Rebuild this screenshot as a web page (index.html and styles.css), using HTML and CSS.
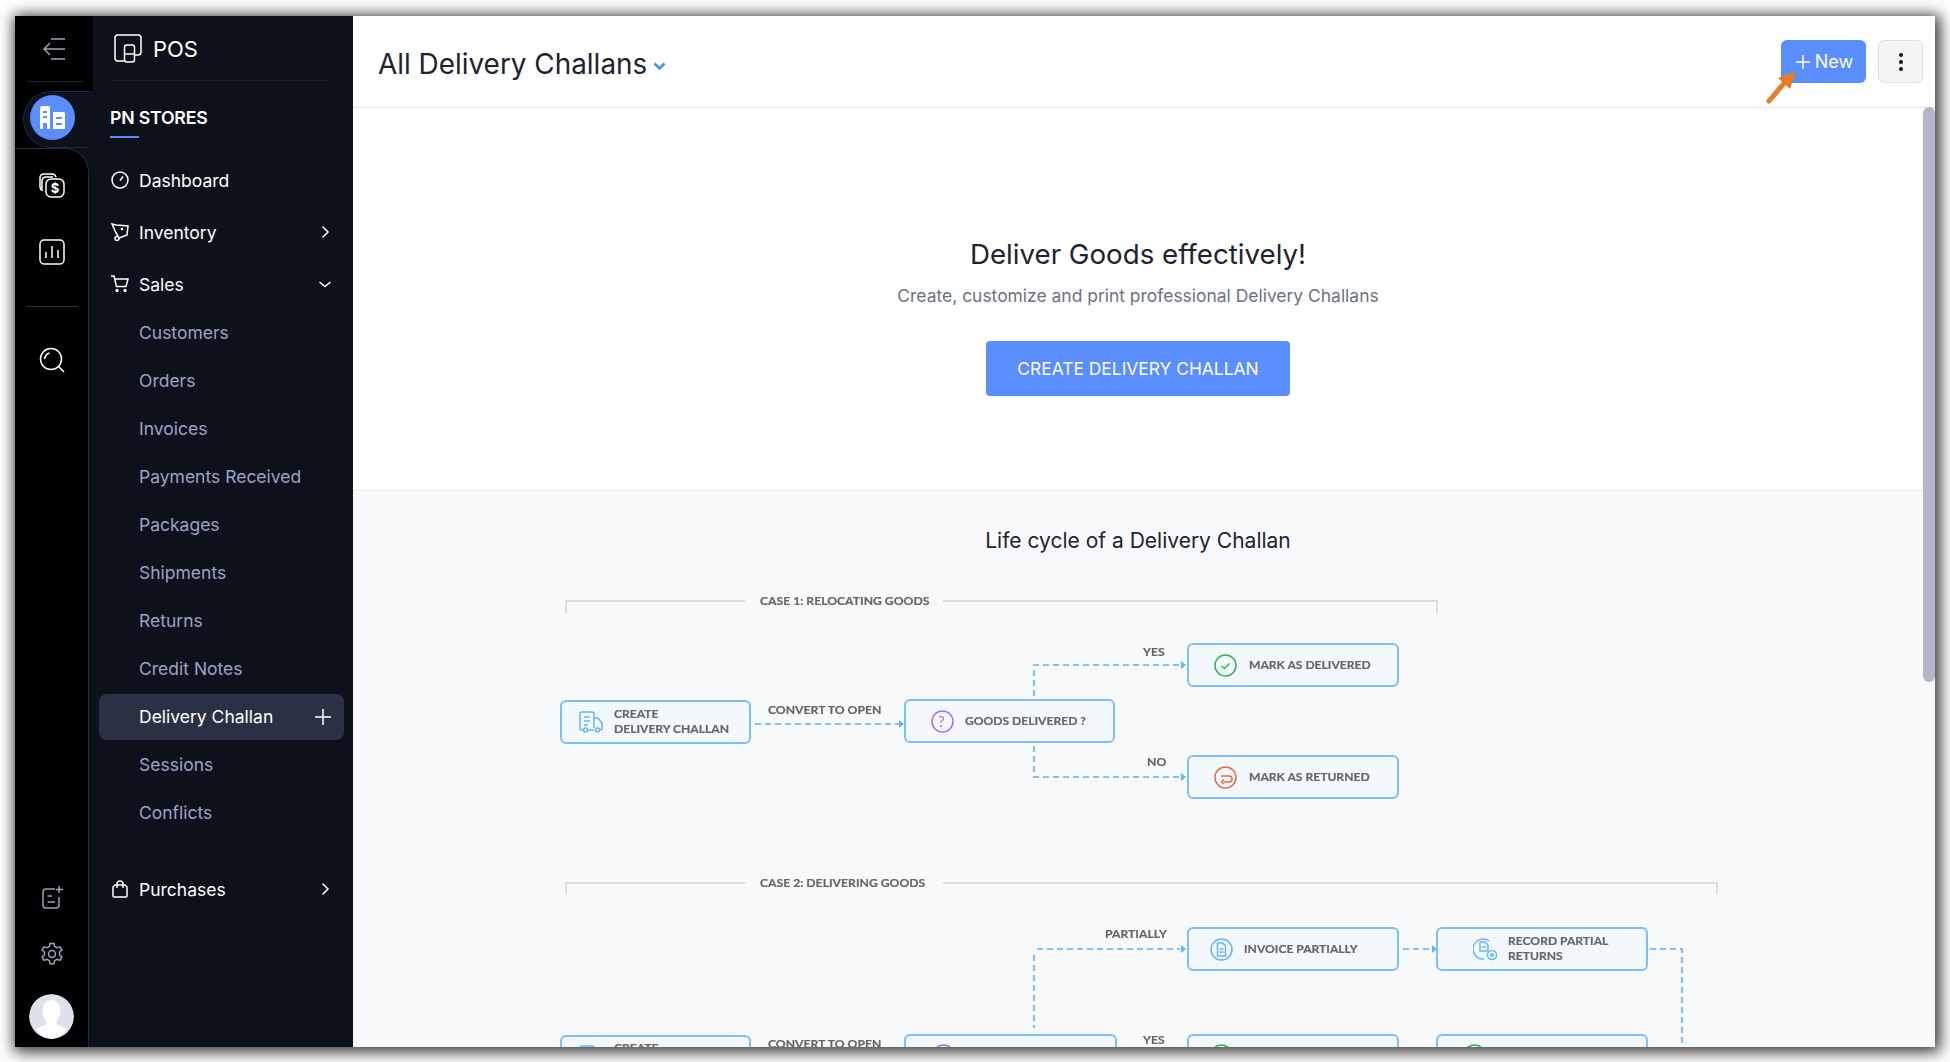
FILE: index.html
```html
<!DOCTYPE html>
<html>
<head>
  <title>All Delivery Challans</title>
  <link rel="stylesheet" href="styles.css">
</head>
<body>
<div class="frame">

  <!-- icon rail -->
  <div class="rail">
    <div class="rail-top">
      <svg class="ico-back" width="24" height="24" viewBox="0 0 24 24"><path d="M8 2h14M1 12h21M8 22h14M7 6l-6 6 6 6"/></svg>
    </div>
    <div class="rail-pocket">
      <div class="pocket-pill">
        <div class="org-badge">
          <svg width="27" height="25" viewBox="0 0 27 25"><path fill="#fff" d="M1 3q0-2 2-2h6q2 0 2 2v21H1z"/><path fill="#fff" d="M14 7h10q2 0 2 2v15H14z"/><path fill="#5a8eff" d="M4 6h4v2H4zM4 11h4v2H4zM4 18h4v6H4zM17 12h6v2h-6zM17 18h6v2h-6z"/></svg>
        </div>
      </div>
    </div>
    <div class="rail-body">
      <div class="rail-main">
        <div class="rail-btn">
          <svg width="26" height="26" viewBox="0 0 26 26" class="ico-w"><path d="M4 18.500q-3-.5-3-4V6q0-4 4-4h8q3 0 4 3"/><path d="M3 17V9q0-4 4-4h7"/><rect x="7" y="7" width="18" height="18" rx="5"/><text x="16" y="21" class="ico-dollar">$</text></svg>
        </div>
        <div class="rail-btn">
          <svg width="26" height="26" viewBox="0 0 26 26" class="ico-w"><rect x="1" y="1" width="24" height="24" rx="4"/><path d="M7 19v-6M13 19V7M19 19v-8"/></svg>
        </div>
        <div class="rail-line"></div>
        <div class="rail-btn rail-search">
          <svg width="26" height="26" viewBox="0 0 26 26" class="ico-w"><circle cx="12" cy="12" r="10.500"/><path d="M19.500 19.500l5.500 5.500M5.500 12q1-5 5-6"/></svg>
        </div>
      </div>
      <div class="rail-foot">
        <svg class="ico-g foot-note" width="24" height="24" viewBox="0 0 24 24"><path d="M14 3H5Q2 3 2 6v13q0 3 3 3h10q3 0 3-3V11M6.500 10H11M6.500 16H14M18 0v7M15 3.500h7"/></svg>
        <svg class="ico-g foot-gear" width="24" height="24" viewBox="0 0 24 24"><circle cx="12" cy="12" r="3.500"/><path d="M10 1.500h4l.6 3 2.400 1.300 2.900-1 2 3.400-2.300 2 .0 2.800 2.300 2-2 3.400-2.900-1-2.400 1.300-.6 3h-4l-.6-3L7 17.400l-2.900 1-2-3.400 2.300-2v-2.800l-2.300-2 2-3.400 2.900 1L9.400 4.500z"/></svg>
        <div class="avatar">
          <svg width="45" height="45" viewBox="0 0 45 45"><circle cx="22.500" cy="22.500" r="22.500" fill="#dde1ec"/><path fill="#fff" d="M22.500 6c6 0 9 5 9 11 0 5-2 8-4 10v3l10 5c-3 6-9 10-15 10s-12-4-15-10l10-5v-3c-2-2-4-5-4-10 0-6 3-11 9-11z"/></svg>
        </div>
      </div>
    </div>
  </div>

  <!-- menu -->
  <div class="side">
    <div class="side-head">
      <svg class="ico-w side-logo" width="29" height="29" viewBox="0 0 29 29"><path d="M10 27H4q-3 0-3-3V4q0-3 3-3h20q3 0 3 3v14q0 3-3 3h-4"/><rect x="10.500" y="11" width="10" height="17" rx="2.500"/><path d="M10.500 20h10"/></svg>
      <span class="side-app">POS</span>
    </div>
    <div class="store">
      <div class="store-name">PN STORES</div>
      <div class="store-bar"></div>
    </div>
    <div class="menu">
      <div class="menu-top">
        <svg class="ico-w" width="18" height="18" viewBox="0 0 18 18"><circle cx="9" cy="9" r="8"/><path d="M9 9.500l3-4"/></svg>
        <span>Dashboard</span>
      </div>
      <div class="menu-top">
        <svg class="ico-w" width="18" height="18" viewBox="0 0 18 18"><path d="M1 1l4 1 12 1-1 9-8 3-3-5z"/><circle cx="6" cy="15.500" r="2"/><circle cx="11" cy="6" r=".6"/></svg>
        <span>Inventory</span>
        <svg class="chev" width="14" height="14" viewBox="0 0 14 14"><path d="M4.500 1.500L10 7l-5.500 5.500"/></svg>
      </div>
      <div class="menu-top menu-open">
        <svg class="ico-w" width="18" height="18" viewBox="0 0 18 18"><path d="M0 1h3l2.500 10.500H15L17 4H4"/><circle cx="6" cy="15.500" r=".9"/><circle cx="14" cy="15.500" r=".9"/></svg>
        <span>Sales</span>
        <svg class="chev" width="14" height="14" viewBox="0 0 14 14"><path d="M1.500 5L7 9.500 12.500 5"/></svg>
      </div>
      <div class="menu-sub">Customers</div>
      <div class="menu-sub">Orders</div>
      <div class="menu-sub">Invoices</div>
      <div class="menu-sub">Payments Received</div>
      <div class="menu-sub">Packages</div>
      <div class="menu-sub">Shipments</div>
      <div class="menu-sub">Returns</div>
      <div class="menu-sub">Credit Notes</div>
      <div class="menu-sub menu-active">
        <span>Delivery Challan</span>
        <svg class="ico-w" width="16" height="16" viewBox="0 0 16 16"><path d="M8 0v16M0 8h16"/></svg>
      </div>
      <div class="menu-sub">Sessions</div>
      <div class="menu-sub">Conflicts</div>
      <div class="menu-top menu-gap">
        <svg class="ico-w" width="18" height="18" viewBox="0 0 18 18"><path d="M4 5h10l2 2v9q0 1-1 1H3q-1 0-1-1V7z"/><path d="M6 8V4q0-3 3-3t3 3v4"/></svg>
        <span>Purchases</span>
        <svg class="chev" width="14" height="14" viewBox="0 0 14 14"><path d="M4.500 1.500L10 7l-5.500 5.500"/></svg>
      </div>
    </div>
  </div>

  <!-- main area -->
  <div class="main">
    <div class="topbar">
      <div class="title">All Delivery Challans</div>
      <svg class="title-caret" width="13" height="9" viewBox="0 0 13 9"><path d="M1.500 1.500l5 5 5-5"/></svg>
      <div class="topbar-right">
        <button class="btn-new">
          <svg width="14" height="14" viewBox="0 0 14 14"><path d="M7 0v14M0 7h14"/></svg>
          <span>New</span>
        </button>
        <button class="btn-more"><i></i><i></i><i></i></button>
      </div>
    </div>

    <div class="hero">
      <h1 class="hero-title">Deliver Goods effectively!</h1>
      <p class="hero-sub">Create, customize and print professional Delivery Challans</p>
      <button class="hero-btn">CREATE DELIVERY CHALLAN</button>
    </div>

    <div class="cycle">
      <h2 class="cycle-title">Life cycle of a Delivery Challan</h2>
      <div class="flow">
        <svg class="flow-lines" width="1582" height="500" viewBox="353 560 1582 500">
          <path class="bracket" d="M566 613V601H745M943 601H1437V613"/>
          <path class="bracket" d="M566 894V883H745M943 883H1717V894"/>
          <path class="dash" d="M755 724H899"/>
          <path class="dash" d="M1034 696V665H1180"/>
          <path class="dash" d="M1034 746V777H1180"/>
          <path class="dash" d="M1037 949H1180"/>
          <path class="dash" d="M1034 955V1028"/>
          <path class="dash" d="M1403 949H1433"/>
          <path class="dash" d="M1650 949H1682V1050"/>
          <path class="tip" d="M899 720l5 4-5 4zM1181 661l5 4-5 4zM1181 773l5 4-5 4zM1181 945l5 4-5 4zM1432 945l5 4-5 4z"/>
        </svg>

        <div class="case case-1">CASE 1: RELOCATING GOODS</div>
        <div class="case case-2">CASE 2: DELIVERING GOODS</div>
        <div class="lbl lbl-conv1">CONVERT TO OPEN</div>
        <div class="lbl lbl-yes1">YES</div>
        <div class="lbl lbl-no">NO</div>
        <div class="lbl lbl-part">PARTIALLY</div>
        <div class="lbl lbl-conv2">CONVERT TO OPEN</div>
        <div class="lbl lbl-yes2">YES</div>

        <div class="node n-create">
          <svg class="fi-blue" width="24" height="22" viewBox="0 0 24 22"><path d="M15 17V3q0-2-2-2H3Q1 1 1 3v14q0 2 2 2h1M9 19h6M15 7h4l4 5v5q0 2-2 2"/><path d="M5 6h6M5 10h6M5 14h4"/><circle cx="6.500" cy="19" r="2"/><circle cx="18.500" cy="19" r="2"/></svg>
          <span>CREATE<br>DELIVERY CHALLAN</span>
        </div>
        <div class="node n-goods">
          <svg class="fi-purple" width="23" height="23" viewBox="0 0 23 23"><circle cx="11.500" cy="11.500" r="10.500"/></svg>
          <em class="mark-q">?</em>
          <span>GOODS DELIVERED ?</span>
        </div>
        <div class="node n-done">
          <svg class="fi-green" width="23" height="23" viewBox="0 0 23 23"><circle cx="11.500" cy="11.500" r="10.500"/><path d="M7.500 12l3 2.500 5-5"/></svg>
          <span>MARK AS DELIVERED</span>
        </div>
        <div class="node n-back">
          <svg class="fi-red" width="23" height="23" viewBox="0 0 23 23"><circle cx="11.500" cy="11.500" r="10.500"/><path d="M10 16H15q3 0 3-3t-3-3H7M10 13.500l-2.500 2.500 2.500 2"/></svg>
          <span>MARK AS RETURNED</span>
        </div>
        <div class="node n-inv">
          <svg class="fi-blue" width="23" height="23" viewBox="0 0 23 23"><circle cx="11.500" cy="11.500" r="10.500"/><path d="M7.500 5h5l3 3v10h-8zM9.500 11h4M9.500 14h4"/></svg>
          <span>INVOICE PARTIALLY</span>
        </div>
        <div class="node n-rec">
          <svg class="fi-blue" width="25" height="24" viewBox="0 0 25 24"><path d="M16 4A10 10 0 1 0 11 22"/><path d="M7 5h5l3 3v6H7zM9 10h4"/><circle cx="19" cy="18" r="4.500"/><circle cx="19" cy="18" r="1.200"/></svg>
          <span>RECORD PARTIAL<br>RETURNS</span>
        </div>
        <div class="node node-low n-create2">
          <svg class="fi-blue" width="24" height="22" viewBox="0 0 24 22"><path d="M15 17V3q0-2-2-2H3Q1 1 1 3v14q0 2 2 2h1"/></svg>
          <span>CREATE<br>DELIVERY CHALLAN</span>
        </div>
        <div class="node node-low n-goods2">
          <svg class="fi-purple" width="23" height="23" viewBox="0 0 23 23"><circle cx="11.500" cy="11.500" r="10.500"/></svg>
        </div>
        <div class="node node-low n-done2">
          <svg class="fi-green" width="23" height="23" viewBox="0 0 23 23"><circle cx="11.500" cy="11.500" r="10.500"/></svg>
        </div>
        <div class="node node-low n-done3">
          <svg class="fi-green" width="23" height="23" viewBox="0 0 23 23"><circle cx="11.500" cy="11.500" r="10.500"/></svg>
        </div>
      </div>
    </div>

    <div class="scroll-thumb"></div>
  </div>

  <svg class="pointer" width="34" height="38" viewBox="0 0 34 38"><path d="M3 34L20 14" class="pointer-line"/><path d="M30 4L12 11l12 11z" class="pointer-head"/></svg>
</div>
</body>
</html>
```

FILE: styles.css
```css
* {
  box-sizing: border-box;
}

html, body {
  margin: 0;
  height: 1062px;
  overflow: hidden;
  background: #fff;
}

body {
  padding: 16px 15px 15px 15px;
  font-family: "Inter", "Liberation Sans", sans-serif;
}

svg {
  display: block;
  flex: none;
}

.frame {
  position: relative;
  display: flex;
  width: 1920px;
  height: 1031px;
  overflow: visible;
  box-shadow: 2px 2px 14px 3px rgba(0, 0, 0, 0.8);
  background: #fff;
}

/* rail */
.rail {
  width: 74px;
  display: flex;
  flex-direction: column;
  background: #0d111c;
  flex: none;
}

.rail-top {
  width: 79px;
  height: 75px;
  background: #000;
  border-right: 1px solid #141824;
  position: relative;
  z-index: 1;
  display: flex;
  justify-content: center;
  align-items: flex-start;
  padding: 21px 0 0 2px;
}

.rail-top::after {
  content: "";
  position: absolute;
  left: 12px;
  right: 10px;
  bottom: 9px;
  height: 1px;
  background: #1e2330;
}

.ico-back path {
  fill: none;
  stroke: #98a3ba;
  stroke-width: 1.5;
}

.rail-pocket {
  height: 57px;
  background: #000;
  padding-left: 8px;
}

.pocket-pill {
  height: 57px;
  background: #0d111c;
  border-radius: 29px 0 0 29px;
  border: 1px solid #232a3a;
  border-right: 0;
  padding: 3px 0 0 6px;
  width: 72px;
}

.org-badge {
  width: 45px;
  height: 45px;
  border-radius: 50%;
  background: #5a8eff;
  display: flex;
  align-items: center;
  justify-content: center;
}

.rail-body {
  flex: 1;
  background: #000;
  border-top-right-radius: 24px;
  border-top: 1px solid #232a3a;
  border-right: 1px solid #232a3a;
  display: flex;
  flex-direction: column;
  justify-content: space-between;
}

.rail-main {
  display: flex;
  flex-direction: column;
  align-items: center;
  padding-top: 23px;
}

.rail-btn {
  height: 67px;
  padding-top: 0;
  display: flex;
  align-items: flex-start;
  justify-content: center;
}

.rail-line {
  width: 52px;
  height: 1px;
  background: #2a3040;
  margin-top: 0;
  margin-bottom: 40px;
}

.ico-w {
  fill: none;
  stroke: #fff;
  stroke-width: 1.5;
}

.ico-w text {
  fill: #fff;
  stroke: none;
}

.ico-dollar {
  font: 700 13px "Inter", sans-serif;
  text-anchor: middle;
}

.ico-g {
  fill: none;
  stroke: #9aa3b8;
  stroke-width: 1.5;
}

.rail-foot {
  display: flex;
  flex-direction: column;
  align-items: center;
  padding-bottom: 8px;
}

.foot-note {
  margin: 0 0 32px 3px;
}

.foot-gear {
  margin-bottom: 28px;
}

.avatar {
  width: 45px;
  height: 45px;
  border-radius: 50%;
  overflow: hidden;
}

/* menu */
.side {
  width: 264px;
  background: #0d111c;
  flex: none;
  color: #fff;
  padding-left: 10px;
  padding-right: 9px;
}

.side-head {
  height: 65px;
  margin-left: 15px;
  margin-right: 16px;
  border-bottom: 1px solid #1b2030;
  display: flex;
  align-items: center;
  gap: 10px;
  padding-top: 6px;
  padding-bottom: 4px;
}

.side-logo {
  margin-bottom: 2px;
}

.side-app {
  font-size: 22px;
}

.store {
  height: 73px;
  padding: 25px 0 0 11px;
}

.store-name {
  font-size: 17.700px;
  font-weight: 600;
  line-height: 24px;
  letter-spacing: -0.2px;
}

.store-bar {
  width: 29px;
  height: 2px;
  margin-top: 6px;
  background: #5a8eff;
}

.menu-top {
  height: 52px;
  display: flex;
  align-items: center;
  padding-left: 12px;
  gap: 10px;
  font-size: 17.500px;
}

.menu-open {
  margin-bottom: -2px;
}

.menu-top .chev {
  margin-left: auto;
  margin-right: 12px;
  fill: none;
  stroke: #fff;
  stroke-width: 1.5;
}

.menu-sub {
  height: 48px;
  display: flex;
  align-items: center;
  padding-left: 40px;
  font-size: 17.500px;
  color: #98a5c4;
}

.menu-active {
  height: 46px;
  margin: 2px 0 0;
  padding-bottom: 1px;
  background: #2a3145;
  border-radius: 8px;
  color: #fff;
  justify-content: space-between;
  padding-right: 13px;
}

.menu-gap {
  margin-top: 27px;
}

/* main */
.main {
  flex: 1;
  position: relative;
  overflow: hidden;
  display: flex;
  flex-direction: column;
  background: #fff;
}

.topbar {
  height: 92px;
  flex: none;
  display: flex;
  align-items: center;
  padding: 4px 12px 0 25px;
  border-bottom: 1px solid #e3e3e3;
}

.title {
  font-size: 27.900px;
  color: #1e2330;
}

.title-caret {
  margin: 5px 0 0 6px;
  fill: none;
  stroke: #408dfb;
  stroke-width: 2.500;
}

.topbar-right {
  margin-left: auto;
  display: flex;
  gap: 12px;
  margin-top: -9px;
  margin-bottom: -5px;
}

.btn-new {
  width: 85px;
  height: 43px;
  border: 0;
  border-radius: 6px;
  background: #5a8eff;
  color: #fff;
  font: 18px "Inter", sans-serif;
  display: flex;
  align-items: center;
  justify-content: center;
  gap: 5px;
  padding: 0 0 0 2px;
}

.btn-new path {
  stroke: #fff;
  stroke-width: 1.5;
}

.btn-more {
  width: 45px;
  height: 43px;
  border: 1px solid #e0e0e0;
  border-radius: 6px;
  background: #f5f5f5;
  display: flex;
  flex-direction: column;
  align-items: center;
  justify-content: center;
  gap: 3px;
  padding: 0;
}

.btn-more i {
  width: 4px;
  height: 4px;
  border-radius: 50%;
  background: #111;
}

.hero {
  height: 383px;
  flex: none;
  border-bottom: 1px solid #eaeaea;
  display: flex;
  flex-direction: column;
  align-items: center;
  padding-right: 12px;
  padding-top: 128px;
}

.hero-title {
  margin: 0;
  font-size: 27.700px;
  font-weight: 400;
  line-height: 36px;
  color: #1e2330;
}

.hero-sub {
  margin: 12px 0 0;
  font-size: 17.450px;
  line-height: 24px;
  color: #6c7280;
}

.hero-btn {
  margin-top: 33px;
  width: 304px;
  height: 55px;
  border: 0;
  border-radius: 4px;
  background: #5a8eff;
  color: #fff;
  font: 17.400px "Inter", sans-serif;
}

.cycle {
  flex: 1;
  background: #f8f9fb;
  padding-right: 12px;
}

.cycle-title {
  margin: 36px 0 0;
  height: 33px;
  line-height: 28px;
  font-size: 21px;
  font-weight: 400;
  text-align: center;
  color: #1e2330;
}

.flow {
  position: relative;
  height: 500px;
  font-family: "Lato", "Open Sans", sans-serif;
  font-weight: 700;
  color: #666;
  filter: blur(0.35px);
  -webkit-text-stroke: 0.2px #666;
}

.flow-lines {
  position: absolute;
  left: 0;
  top: 0;
}

.bracket {
  fill: none;
  stroke: #ddd;
  stroke-width: 2;
}

.dash {
  fill: none;
  stroke: #80c2fb;
  stroke-width: 2.200;
  stroke-dasharray: 6 4;
}

.tip {
  fill: #64b5fa;
}

.case, .lbl {
  position: absolute;
  font-size: 12.200px;
  line-height: 16px;
  white-space: nowrap;
}

.case-1 { left: 407px; top: 33px; }
.case-2 { left: 407px; top: 315px; }
.lbl-conv1 { left: 415px; top: 142px; }
.lbl-yes1 { left: 790px; top: 84px; }
.lbl-no { left: 794px; top: 194px; }
.lbl-part { left: 752px; top: 366px; }
.lbl-conv2 { left: 415px; top: 476px; }
.lbl-yes2 { left: 790px; top: 472px; }

.node {
  position: absolute;
  height: 44px;
  display: flex;
  align-items: center;
  border: 2px solid #7dbffb;
  border-radius: 6px;
  background: #f3f8fd;
  font-size: 12.100px;
  line-height: 15px;
  white-space: nowrap;
}

.node span {
  display: block;
  margin-top: -2px;
}

.n-create { left: 207px; top: 140px; width: 191px; padding-left: 17px; gap: 11px; }
.n-goods { left: 551px; top: 139px; width: 211px; padding-left: 25px; }
.n-goods span { margin-left: 11px; }
.n-done { left: 834px; top: 83px; width: 212px; padding-left: 25px; gap: 12px; }
.n-back { left: 834px; top: 195px; width: 212px; padding-left: 25px; gap: 12px; }
.n-inv { left: 834px; top: 367px; width: 212px; padding-left: 21px; gap: 11px; }
.n-rec { left: 1083px; top: 367px; width: 212px; padding-left: 35px; gap: 10px; }
.n-create2 { left: 207px; top: 475px; width: 191px; padding-left: 17px; gap: 11px; }
.n-goods2 { left: 551px; top: 474px; width: 213px; padding-left: 26px; }
.n-done2 { left: 834px; top: 474px; width: 212px; padding-left: 21px; }
.n-done3 { left: 1083px; top: 474px; width: 212px; padding-left: 25px; }

.node-low {
  height: 60px;
  align-items: flex-start;
}

.node-low svg {
  margin-top: 8px;
}

.node .node-low span, .node-low span {
  margin-top: 3px;
}

.fi-blue, .fi-purple, .fi-green, .fi-red {
  fill: none;
  stroke-width: 1.500;
  -webkit-text-stroke: 0;
}

.fi-blue { stroke: #64b5fa; }
.fi-purple { stroke: #a66ff0; }
.fi-green { stroke: #2db84a; }
.fi-red { stroke: #e8694a; }

.mark-q {
  font-style: normal;
  font-weight: 400;
  font-size: 15px;
  color: #a66ff0;
  -webkit-text-stroke: 0;
  margin-left: -16px;
  width: 16px;
}

.scroll-thumb {
  position: absolute;
  right: 0;
  top: 91px;
  width: 12px;
  height: 575px;
  border-radius: 6px;
  background: #b5b5c9;
}

.pointer {
  position: absolute;
  left: 1751px;
  top: 51px;
}

.pointer-line {
  stroke: #e87b25;
  stroke-width: 5;
  stroke-linecap: round;
  fill: none;
}

.pointer-head {
  fill: #e87b25;
}
```
